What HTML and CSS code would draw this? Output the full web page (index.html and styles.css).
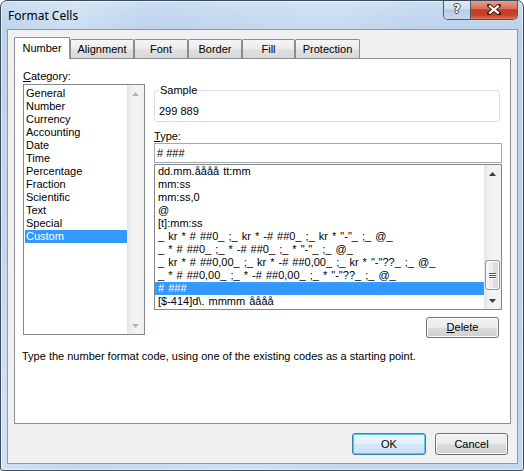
FILE: index.html
```html
<!DOCTYPE html>
<html>
<head>
<meta charset="utf-8">
<title>Format Cells</title>
<link rel="stylesheet" href="styles.css">
</head>
<body>
<div class="window">
  <div class="titlebar">
    <span class="title">Format Cells</span>
    <div class="caption">
      <div class="cap-help">?</div>
      <div class="cap-close">
        <svg width="14" height="11" viewBox="0 0 14 11">
          <path d="M2 1.5 L12 9.5 M12 1.5 L2 9.5" stroke="#3b1a14" stroke-width="4" stroke-linecap="square" fill="none"/>
          <path d="M2.2 1.7 L11.8 9.3 M11.8 1.7 L2.2 9.3" stroke="#ffffff" stroke-width="2.2" fill="none"/>
        </svg>
      </div>
    </div>
  </div>
  <div class="client">
    <div class="tabs">
      <div class="tab active w-number">Number</div>
      <div class="tab w-align">Alignment</div>
      <div class="tab w-font">Font</div>
      <div class="tab w-border">Border</div>
      <div class="tab w-fill">Fill</div>
      <div class="tab w-prot">Protection</div>
    </div>
    <div class="panel">
      <div class="cols">
        <div class="col-left">
          <div class="label"><u>C</u>ategory:</div>
          <div class="listbox cat-list">
            <ul class="items">
              <li>General</li>
              <li>Number</li>
              <li>Currency</li>
              <li>Accounting</li>
              <li>Date</li>
              <li>Time</li>
              <li>Percentage</li>
              <li>Fraction</li>
              <li>Scientific</li>
              <li>Text</li>
              <li>Special</li>
              <li class="sel">Custom</li>
            </ul>
            <div class="vscroll disabled">
              <div class="arrow"><svg width="7" height="4" viewBox="0 0 7 4"><path d="M0 4 L3.5 0 L7 4z"/></svg></div>
              <div class="arrow"><svg width="7" height="4" viewBox="0 0 7 4"><path d="M0 0 L3.5 4 L7 0z"/></svg></div>
            </div>
          </div>
        </div>
        <div class="col-right">
          <fieldset class="sample">
            <legend>Sample</legend>
            <div class="sample-val">299 889</div>
          </fieldset>
          <div class="label type-label"><u>T</u>ype:</div>
          <div class="textbox"># ###</div>
          <div class="listbox type-list">
            <ul class="items">
              <li>dd.mm.åååå tt:mm</li>
              <li>mm:ss</li>
              <li>mm:ss,0</li>
              <li>@</li>
              <li>[t]:mm:ss</li>
              <li>_ kr * # ##0_ ;_ kr * -# ##0_ ;_ kr * "-"_ ;_ @_</li>
              <li>_ * # ##0_ ;_ * -# ##0_ ;_ * "-"_ ;_ @_</li>
              <li>_ kr * # ##0,00_ ;_ kr * -# ##0,00_ ;_ kr * "-"??_ ;_ @_</li>
              <li>_ * # ##0,00_ ;_ * -# ##0,00_ ;_ * "-"??_ ;_ @_</li>
              <li class="sel focus"># ###</li>
              <li>[$-414]d\. mmmm åååå</li>
            </ul>
            <div class="vscroll">
              <div class="arrow"><svg width="7" height="4" viewBox="0 0 7 4"><path d="M0 4 L3.5 0 L7 4z"/></svg></div>
              <div class="track">
                <div class="thumb"><span></span><span></span><span></span></div>
              </div>
              <div class="arrow"><svg width="7" height="4" viewBox="0 0 7 4"><path d="M0 0 L3.5 4 L7 0z"/></svg></div>
            </div>
          </div>
          <button class="btn delete"><u>D</u>elete</button>
        </div>
      </div>
      <p class="hint">Type the number format code, using one of the existing codes as a starting point.</p>
    </div>
    <div class="footer">
      <button class="btn ok default">OK</button>
      <button class="btn cancel">Cancel</button>
    </div>
  </div>
</div>
</body>
</html>
```

FILE: styles.css
```css
* { box-sizing: border-box; }
html, body { margin: 0; padding: 0; }
body {
  width: 524px;
  height: 471px;
  overflow: hidden;
  background: #ffffff;
  font-family: "Liberation Sans", Arial, sans-serif;
  font-size: 11px;
  line-height: 13px;
  color: #000;
}
u { text-decoration: underline; text-underline-offset: 1px; }

.window {
  width: 524px;
  height: 471px;
  border: 1px solid #3d4a5b;
  border-radius: 7px 7px 3px 3px;
  background:
    linear-gradient(100deg, rgba(255,255,255,0) 0%, rgba(255,255,255,0.25) 12%, rgba(255,255,255,0) 25%, rgba(255,255,255,0.18) 55%, rgba(255,255,255,0) 70%),
    linear-gradient(to bottom, #c9ddf2 0px, #bcd3ec 28px, #b9d1ea 60%, #c3d9f0 100%);
  box-shadow: inset 0 0 0 1px rgba(255,255,255,0.55);
  padding: 0 5px 6px 6px;
  display: flex;
  flex-direction: column;
  overflow: hidden;
}

.titlebar {
  height: 28px;
  display: flex;
  align-items: flex-start;
  padding-left: 1px;
}
.title {
  flex: 1;
  align-self: center;
  font-family: "Noto Sans", "Open Sans", sans-serif;
  font-size: 12px;
  line-height: 16px;
  margin-top: 1px;
  color: #000;
}
.caption {
  display: flex;
  margin-top: -1px;
  height: 20px;
  border: 1px solid #4b5a70;
  border-top: none;
  border-radius: 0 0 5px 5px;
  overflow: hidden;
}
.cap-help {
  width: 26px;
  height: 19px;
  background: linear-gradient(to bottom, #e3ecf6 0%, #cfdded 48%, #b7cbe3 52%, #c7d9ee 100%);
  color: #fff;
  font-family: "DejaVu Sans", sans-serif;
  font-weight: bold;
  font-size: 12px;
  line-height: 19px;
  text-align: center;
  text-shadow: 1px 0 0 #3a4658, -1px 0 0 #3a4658, 0 1px 0 #3a4658, 0 -1px 0 #3a4658;
}
.cap-close {
  width: 47px;
  height: 19px;
  border-left: 1px solid #4b5a70;
  background: linear-gradient(to bottom, #eba493 0%, #d9705a 45%, #c23a24 52%, #c8432a 80%, #da7658 100%);
  display: flex;
  align-items: center;
  justify-content: center;
}

.client {
  height: 435px;
  border: 1px solid #8d9aac;
  background: #f0f0f0;
  display: flex;
  flex-direction: column;
}

.tabs {
  display: flex;
  align-items: flex-end;
  height: 21px;
  margin: 7px 0 0 6px;
}
.tab {
  height: 19px;
  border: 1px solid #898c95;
  border-bottom: none;
  border-radius: 2px 2px 0 0;
  padding-top: 3px;
  text-align: center;
  background: linear-gradient(to bottom, #f5f5f5 0%, #ececec 45%, #e0e0e0 55%, #d8d8d8 100%);
}
.tab.active {
  height: 22px;
  margin-bottom: -1px;
  padding-top: 4px;
  background: #ffffff;
  position: relative;
  z-index: 1;
}
.w-number { width: 56px; }
.w-align { width: 64px; }
.w-font { width: 54px; }
.w-border { width: 54px; }
.w-fill { width: 53px; }
.w-prot { width: 65px; }

.panel {
  width: 497px;
  height: 366px;
  margin-left: 6px;
  border: 1px solid #898c95;
  background: #ffffff;
  padding: 11px 8px 0 8px;
}
.cols {
  display: flex;
  gap: 9px;
}
.col-left {
  width: 122px;
  display: flex;
  flex-direction: column;
}
.col-right {
  width: 348px;
  display: flex;
  flex-direction: column;
  padding-top: 14px;
}
.label { height: 13px; white-space: nowrap; }

.listbox {
  border: 1px solid #828790;
  display: flex;
  background: #fff;
}
.items {
  list-style: none;
  margin: 0;
  flex: 1;
  overflow: hidden;
}
.items li {
  height: 13px;
  line-height: 13px;
  white-space: nowrap;
}
.items li.sel {
  background: #3399ff;
  color: #fff;
}
.items li.focus {
  outline: 1px dotted #b98a4c;
  outline-offset: -1px;
}

.cat-list {
  margin-top: 1px;
  height: 251px;
}
.cat-list .items { padding: 2px 0 0 1px; }
.cat-list .items li { padding-left: 1px; }

.type-list {
  margin-top: 1px;
  height: 146px;
}
.type-list .items { padding: 0; }
.type-list .items li { padding-left: 3px; word-spacing: 1px; }

.vscroll {
  width: 17px;
  flex: none;
  display: flex;
  flex-direction: column;
  justify-content: space-between;
  background: linear-gradient(to right, #e4e4e4 0%, #eeeeee 20%, #f4f4f4 60%, #f0f0f0 100%);
}
.arrow {
  height: 17px;
  display: flex;
  align-items: center;
  justify-content: center;
}
.arrow svg { fill: #3c3c3c; }
.vscroll.disabled .arrow svg { fill: #b4b4b4; }
.track {
  flex: 1;
  padding: 78px 0 0 1px;
}
.thumb {
  width: 15px;
  height: 30px;
  border: 1px solid #959595;
  border-radius: 3px;
  background: linear-gradient(to right, #f4f4f4 0%, #ececec 50%, #dedede 51%, #d9d9d9 100%);
  box-shadow: inset 0 0 0 1px #fbfbfb;
  display: flex;
  flex-direction: column;
  align-items: center;
  justify-content: center;
  gap: 1px;
}
.thumb span {
  width: 7px;
  height: 1px;
  background: #5a5a5a;
  box-shadow: 0 1px 0 #ffffff;
}

.sample {
  width: 346px;
  margin: 0;
  border: 1px solid #d5dfe5;
  border-radius: 3px;
  padding: 8px 4px 3px 4px;
  min-inline-size: 0;
}
.sample legend {
  padding: 0 1px;
  line-height: 13px;
}
.sample-val { height: 13px; }

.type-label { margin-top: 8px; }
.textbox {
  height: 20px;
  border: 1px solid #a3a7ae;
  padding: 3px 2px 0 2px;
  white-space: nowrap;
}

.btn {
  font-family: inherit;
  font-size: 11px;
  line-height: 13px;
  color: #000;
  padding: 0;
  border: 1px solid #707070;
  border-radius: 3px;
  background: linear-gradient(to bottom, #f2f2f2 0%, #ebebeb 50%, #dddddd 51%, #cfcfcf 100%);
  box-shadow: inset 0 0 0 1px #fcfcfc;
}
.delete {
  align-self: flex-end;
  width: 73px;
  height: 21px;
  margin-top: 7px;
  margin-right: 3px;
}
.hint {
  margin: 12px 0 0 -1px;
  white-space: nowrap;
}

.footer {
  display: flex;
  justify-content: flex-end;
  gap: 9px;
  margin-top: 9px;
  padding-right: 9px;
}
.ok { width: 74px; height: 22px; }
.cancel { width: 73px; height: 22px; }
.btn.default {
  border-color: #3c7fb1;
  box-shadow: inset 0 0 0 1px #57c8f2;
  background: linear-gradient(to bottom, #eaf6fd 0%, #e3f1fb 50%, #d3e9f8 51%, #c8e2f5 100%);
}
```
